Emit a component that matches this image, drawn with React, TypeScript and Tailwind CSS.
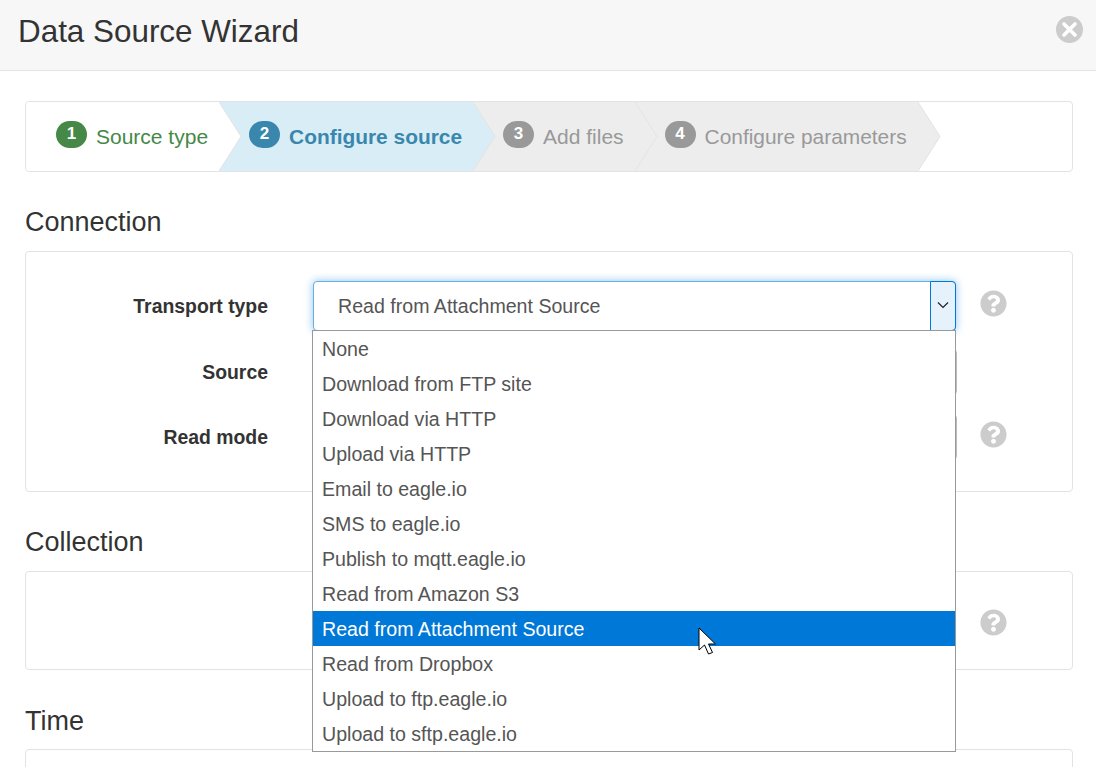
import { FaQuestionCircle } from 'react-icons/fa';

const steps = [
    { n: 1, label: 'Source type', bg: 'bg-white', fill: '#ffffff', text: 'text-[21px] text-[#468847]', badge: 'bg-[#468847]', z: 'z-40' },
    { n: 2, label: 'Configure source', bg: 'bg-[#d9edf7]', fill: '#d9edf7', text: 'text-[20.9px] font-bold text-[#3a87ad]', badge: 'bg-[#3a87ad]', z: 'z-30' },
    { n: 3, label: 'Add files', bg: 'bg-[#ededed]', fill: '#ededed', text: 'text-[21px] text-[#999999]', badge: 'bg-[#999999]', z: 'z-20' },
    { n: 4, label: 'Configure parameters', bg: 'bg-[#ededed]', fill: '#ededed', text: 'text-[20.9px] text-[#999999]', badge: 'bg-[#999999]', z: 'z-10' },
];

const options = [
    'None',
    'Download from FTP site',
    'Download via HTTP',
    'Upload via HTTP',
    'Email to eagle.io',
    'SMS to eagle.io',
    'Publish to mqtt.eagle.io',
    'Read from Amazon S3',
    'Read from Attachment Source',
    'Read from Dropbox',
    'Upload to ftp.eagle.io',
    'Upload to sftp.eagle.io',
];

function Help() {
    return <FaQuestionCircle className="h-[27px] w-[27px] text-[#cccccc]" />;
}

function CloseIcon() {
    return (
        <svg className="mt-[16px]" width="27" height="27" viewBox="0 0 27 27">
            <circle cx="13.5" cy="13.5" r="13.5" fill="#cccccc" />
            <path d="M8 8 L19 19 M19 8 L8 19" stroke="#ffffff" strokeWidth="3.6" strokeLinecap="round" />
        </svg>
    );
}

function Wizard() {
    return (
        <div className="flex h-[71px] rounded border border-[#e3e3e3] bg-white">
            {steps.map((s) => (
                <div key={s.n} className={`relative flex items-center pl-[30px] pr-[11px] ${s.bg} ${s.z} first:rounded-l`}>
                    <span className={`mt-[-5px] flex h-[27px] w-[31px] items-center justify-center rounded-full text-[17px] font-bold text-white ${s.badge}`}>
                        {s.n}
                    </span>
                    <span className={`ml-[9px] ${s.text}`}>{s.label}</span>
                    <svg className="absolute left-full top-0" width="23" height="69" viewBox="0 0 23 69">
                        <path d="M0 0 L22 34.5 L0 69" fill={s.fill} stroke="#e3e3e3" strokeWidth="1" />
                    </svg>
                </div>
            ))}
        </div>
    );
}

function Menu() {
    return (
        <div className="absolute left-[-1px] right-0 top-[calc(100%-1px)] z-50 border border-[#999999] bg-white">
            {options.map((o) => (
                <div
                    key={o}
                    className={`flex h-[35px] items-center px-[9px] pt-[2px] text-[19.6px] ${
                        o === 'Read from Attachment Source' ? 'bg-[#0078d7] text-white' : 'text-[#555555]'
                    }`}
                >
                    {o}
                </div>
            ))}
        </div>
    );
}

function Cursor() {
    return (
        <svg className="absolute left-[698px] top-[627px] z-[60]" width="19" height="29" viewBox="0 0 19 29">
            <path
                d="M1 1 L1 23 L6.5 18 L10.5 27 L14.5 25.5 L10.5 17 L17.5 17 Z"
                fill="#ffffff"
                stroke="#000000"
                strokeWidth="1"
                strokeLinejoin="miter"
            />
        </svg>
    );
}

function FocusedSelect() {
    return (
        <div className="relative ml-[45px] h-[50px] w-[643px]">
            <div className="flex h-full items-center rounded border border-[#66afe9] bg-white pl-[24px] pt-[2px] text-[19.6px] text-[#555555] shadow-[0_0_8px_rgba(102,175,233,0.75)]">
                Read from Attachment Source
            </div>
            <div className="absolute bottom-0 right-0 top-0 flex w-[26px] items-center justify-center rounded-r border border-[#0078d7] bg-[#e5f1fb]">
                <svg width="12" height="8" viewBox="0 0 12 8" className="mt-[-3px]">
                    <path d="M1 1.5 L6 6.5 L11 1.5" fill="none" stroke="#222222" strokeWidth="1.2" />
                </svg>
            </div>
            <Menu />
        </div>
    );
}

function PlainSelect({ width = 'w-[644px]' }: { width?: string }) {
    return <div className={`ml-[45px] h-[46px] rounded border border-[#bbbbbb] bg-white ${width}`} />;
}

function Label({ children }: { children?: string }) {
    return <div className="w-[242px] pt-[2px] text-right text-[19.4px] font-bold text-[#333333]">{children}</div>;
}

function Heading({ children }: { children: string }) {
    return <h2 className="pt-px text-[27px] leading-[30px] text-[#333333]">{children}</h2>;
}

export default function App() {
    return (
        <div
            className="relative h-[767px] w-[1096px] overflow-hidden bg-white"
            style={{ fontFamily: '"Liberation Sans", Arial, sans-serif' }}
        >
            <div className="flex h-[71px] justify-between border-b border-[#e5e5e5] bg-[#f7f7f7] pl-[18px] pr-[13px]">
                <h1 className="mt-[14px] text-[31.4px] leading-[36px] text-[#333333]">Data Source Wizard</h1>
                <CloseIcon />
            </div>

            <div className="px-[25px] pr-[23px] pt-[30px]">
                <Wizard />

                <div className="mt-[34px]">
                    <Heading>Connection</Heading>
                    <div className="mt-[14px] flex h-[241px] flex-col rounded border border-[#e3e3e3] pt-[29px]">
                        <div className="flex items-center">
                            <Label>Transport type</Label>
                            <FocusedSelect />
                            <div className="ml-[24px] mt-[-5px]">
                                <Help />
                            </div>
                        </div>
                        <div className="mt-[18px] flex items-center">
                            <Label>Source</Label>
                            <PlainSelect />
                        </div>
                        <div className="mt-[19px] flex items-center">
                            <Label>Read mode</Label>
                            <PlainSelect />
                            <div className="ml-[23px] mt-[-5px]">
                                <Help />
                            </div>
                        </div>
                    </div>
                </div>

                <div className="mt-[34px]">
                    <Heading>Collection</Heading>
                    <div className="mt-[14px] flex h-[99px] items-center rounded border border-[#e3e3e3]">
                        <Label />
                        <PlainSelect width="w-[643px]" />
                        <div className="ml-[24px] mt-[3px]">
                            <Help />
                        </div>
                    </div>
                </div>

                <div className="mt-[35px]">
                    <Heading>Time</Heading>
                    <div className="mt-[13px] h-[60px] rounded border border-[#e3e3e3]" />
                </div>
            </div>

            <Cursor />
        </div>
    );
}
